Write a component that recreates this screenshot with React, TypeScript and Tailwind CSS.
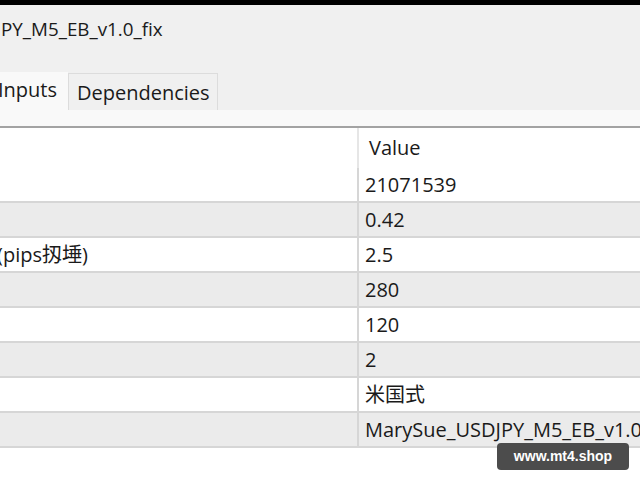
import React from "react";

const rows: { name: string; value: string }[] = [
  { name: "", value: "21071539" },
  { name: "", value: "0.42" },
  { name: "(pips扨埵)", value: "2.5" },
  { name: "", value: "280" },
  { name: "", value: "120" },
  { name: "", value: "2" },
  { name: "", value: "米国式" },
  { name: "", value: "MarySue_USDJPY_M5_EB_v1.0_fix" },
];

export default function App() {
  return (
    <div className="relative w-[640px] h-[480px] overflow-hidden bg-white text-[#1a1a1a] font-['Open_Sans','Noto_Sans_CJK_JP',sans-serif]">
      <div className="h-[5px] bg-black" />
      <div className="h-[67px] bg-[#f0f0f0]">
        <div className="pt-[12px] -ml-[4px] text-[18.8px] leading-[24px] whitespace-nowrap">
          JPY_M5_EB_v1.0_fix
        </div>
      </div>
      <div className="flex h-[38px] bg-[#f0f0f0]">
        <div className="w-[70px] h-full bg-[#f9f9f9] flex items-center -ml-[2px] pb-[2px] text-[20px] leading-[24px]">
          Inputs
        </div>
        <div className="mt-[1px] w-[150px] h-[37px] border border-[#dcdcdc] border-b-0 bg-[#f0f0f0] flex items-center pl-[8px] pt-[2px] text-[20px] leading-[24px]">
          Dependencies
        </div>
      </div>
      <div className="h-[16px] bg-[#f9f9f9]" />
      <div className="h-[2px] bg-[#a3a3a3]" />
      <div className="flex h-[40px] bg-white">
        <div className="w-[359px] border-r-2 border-[#e6e6e6]" />
        <div className="flex items-center pl-[10px] text-[20px] leading-[24px]">Value</div>
      </div>
      {rows.map((r, i) => (
        <div
          key={i}
          className={
            i % 2 === 1
              ? "flex h-[35px] border-b-2 border-[#d6d6d6] bg-[#ebebeb]"
              : "flex h-[35px] border-b-2 border-[#d6d6d6] bg-white"
          }
        >
          <div className="w-[359px] shrink-0 border-r-2 border-[#d6d6d6] flex items-center overflow-hidden">
            <span className="-ml-[3px] text-[20px] leading-[24px] whitespace-nowrap">{r.name}</span>
          </div>
          <div className="flex items-center pl-[6px] text-[20px] leading-[24px] whitespace-nowrap">
            {r.value}
          </div>
        </div>
      ))}
      <div className="absolute left-[497px] top-[443px] w-[132px] h-[27px] rounded-[4px] bg-[#4c4c4c] flex items-center justify-center text-white text-[14px] font-bold font-['Liberation_Sans',Arial,sans-serif]">
        www.mt4.shop
      </div>
    </div>
  );
}
